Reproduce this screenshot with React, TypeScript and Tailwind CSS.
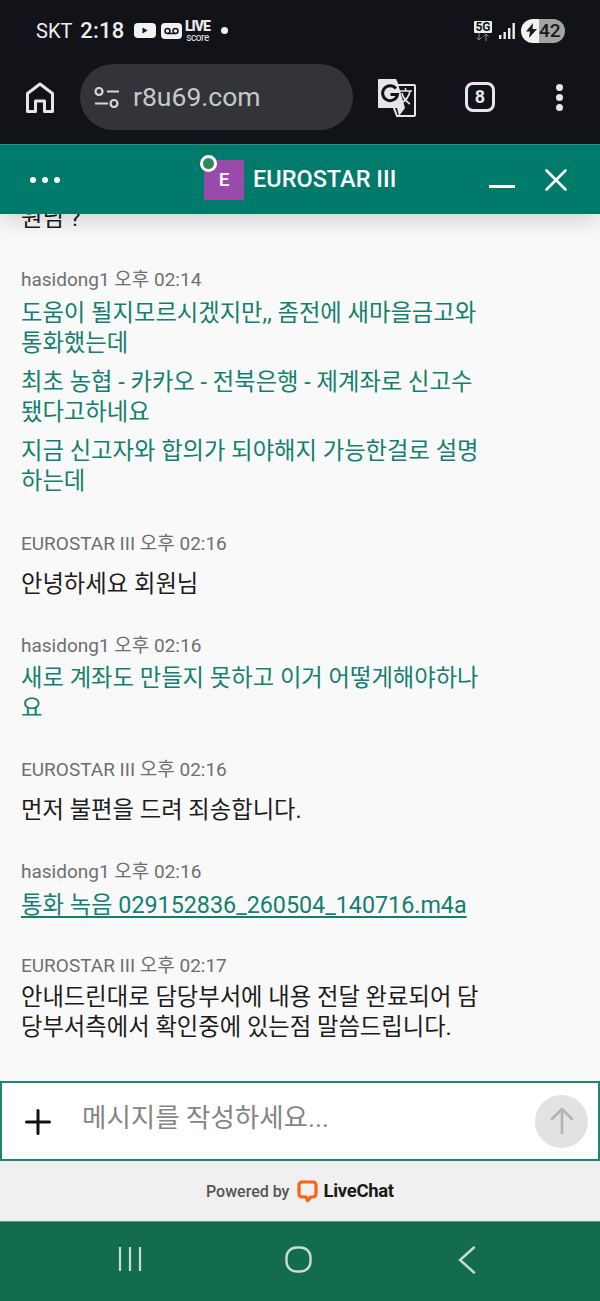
import React from "react";

const FONT = "font-['Roboto','Noto_Sans_CJK_KR',sans-serif]";

function Name({ children, cls }: { children: React.ReactNode; cls: string }) {
  return <div className={`text-[19px] leading-[24px] text-[#6f6f6f] ${cls}`}>{children}</div>;
}

function Line({ children, cls = "" }: { children: React.ReactNode; cls?: string }) {
  return <div className={`text-[23.3px] leading-[30px] whitespace-nowrap ${cls}`}>{children}</div>;
}

function StatusBar() {
  return (
    <div className="h-[60px] flex items-center pl-[36px] pr-[35px] pt-[1px] text-[#eeeeee]">
      <span className="text-[20px] leading-none">SKT</span>
      <span className="ml-[8px] text-[22px] leading-none font-medium tracking-[0.2px]">2:18</span>
      <svg width="22" height="15" viewBox="0 0 22 15" className="ml-[10px]">
        <rect width="22" height="15" rx="4" fill="#f2f2f2" />
        <path d="M8.500 4.500v6l5-3z" fill="#121318" />
      </svg>
      <svg width="21" height="16" viewBox="0 0 21 16" className="ml-[5px]">
        <rect width="21" height="16" rx="4" fill="#f2f2f2" />
        <circle cx="6.500" cy="8" r="2.500" fill="none" stroke="#121318" strokeWidth="1.500" />
        <circle cx="14.500" cy="8" r="2.500" fill="none" stroke="#121318" strokeWidth="1.500" />
        <path d="M6.500 10.500h8" stroke="#121318" strokeWidth="1.500" />
      </svg>
      <div className="ml-[4px] flex flex-col items-center w-[22px] text-[#e8e8e8]">
        <span className="text-[14px] leading-[13px] font-black tracking-[-1px]">LIVE</span>
        <span className="text-[10px] leading-[9px] tracking-[-0.4px]">score</span>
      </div>
      <span className="ml-[13px] w-[7px] h-[7px] rounded-full bg-[#f0f0f0]" />
      <div className="ml-auto flex items-center">
        <div className="flex flex-col items-center w-[18px] mr-[7px]">
          <span className="bg-[#eeeeee] text-[#121318] text-[12px] leading-[12px] font-bold px-[1px] rounded-[1px]">5G</span>
          <svg width="16" height="8" viewBox="0 0 16 8">
            <path d="M4 0v7M1.500 4.500 4 7l2.500-2.500M11 8V1M8.500 3.500 11 1l2.500 2.500" stroke="#8a8a8a" strokeWidth="1" fill="none" />
          </svg>
        </div>
        <svg width="16" height="16" viewBox="0 0 16 16" className="mr-[6px]">
          <rect x="0" y="12" width="2.400" height="4" fill="#eeeeee" />
          <rect x="4.500" y="9" width="2.400" height="7" fill="#eeeeee" />
          <rect x="9" y="5" width="2.400" height="11" fill="#eeeeee" />
          <rect x="13.500" y="0" width="2.400" height="16" fill="#eeeeee" />
        </svg>
        <div className="w-[44px] h-[24px] rounded-full bg-[linear-gradient(90deg,#f2f2f2_0,#f2f2f2_40%,#a3a3a3_40%,#a3a3a3_100%)] flex items-center text-[#1a1a1a]">
          <svg width="11" height="15" viewBox="0 0 11 15" className="ml-[5px]">
            <path d="M7 0 0 8.500h4L3 15l8-9H6.500z" fill="#1a1a1a" />
          </svg>
          <span className="ml-[2px] text-[19px] leading-none font-medium">42</span>
        </div>
      </div>
    </div>
  );
}

function Toolbar() {
  return (
    <div className="flex items-start h-[84px] pt-[4px]">
      <div className="w-[80px] h-[66px] flex items-center pl-[26px]">
        <svg width="28" height="31" viewBox="0 0 28 31" fill="none" stroke="#e6e6ea" strokeWidth="3">
          <path d="M1.500 29.500V11.500L14 2l12.500 9.500v18H18.500V19h-9v10.500z" strokeLinejoin="round" />
        </svg>
      </div>
      <div className="w-[273px] h-[66px] rounded-full bg-[#333438] flex items-center pl-[14px]">
        <svg width="26" height="21" viewBox="0 0 26 21" fill="none" stroke="#d8d8dc" strokeWidth="2.200">
          <circle cx="5" cy="4.500" r="3.500" />
          <path d="M13 4.500h12M1 16.500h13" />
          <circle cx="20" cy="16.500" r="3.500" />
        </svg>
        <span className="ml-[13px] text-[26.500px] leading-none text-[#c8c8cc]">r8u69.com</span>
      </div>
      <svg width="38" height="38" viewBox="0 0 38 38" className="ml-[25px] mt-[15px]">
        <path d="M17 6h19a1 1 0 0 1 1 1v29a1 1 0 0 1-1 1H19l-3-8z" fill="#121318" stroke="#e6e6ea" strokeWidth="2" />
        <path d="M1 0h17l1.500 3 7.500 26H1a1 1 0 0 1-1-1V1a1 1 0 0 1 1-1z" fill="#e6e6ea" />
        <path d="M19 29h8l-6 8z" fill="#e6e6ea" />
        <path d="M18 9.500a7.500 7.500 0 1 0 1.500 6h-7" fill="none" stroke="#121318" strokeWidth="3" />
        <path d="M21 12h13M27.500 9v3M32 12c-1 6-5 10-9 12M24 14c1 5 5 9 8 11" fill="none" stroke="#e6e6ea" strokeWidth="1.600" />
      </svg>
      <div className="ml-[49px] mt-[18px] w-[30px] h-[30px] rounded-[8px] border-[3px] border-[#e6e6ea] flex items-center justify-center">
        <span className="text-[18px] leading-none font-bold text-[#e6e6ea]">8</span>
      </div>
      <div className="ml-[61px] mt-[20px] flex flex-col gap-[3px]">
        <span className="w-[7px] h-[7px] rounded-full bg-[#e6e6ea]" />
        <span className="w-[7px] h-[7px] rounded-full bg-[#e6e6ea]" />
        <span className="w-[7px] h-[7px] rounded-full bg-[#e6e6ea]" />
      </div>
    </div>
  );
}

function ChatHeader() {
  return (
    <div className="relative z-10 h-[70px] shrink-0 bg-[#007a6b] flex items-center shadow-[0_6px_22px_rgba(0,0,0,0.16)] border-t border-[#2f8d80]">
      <div className="ml-[30px] flex gap-[6px] w-[174px]">
        <span className="w-[6px] h-[6px] rounded-full bg-white" />
        <span className="w-[6px] h-[6px] rounded-full bg-white" />
        <span className="w-[6px] h-[6px] rounded-full bg-white" />
      </div>
      <div className="relative w-[40px] h-[40px] bg-[#9a4aa8] flex items-center justify-center">
        <span className="text-[19px] font-medium text-white leading-none">E</span>
        <span className="absolute -left-[4px] -top-[5px] w-[17px] h-[17px] rounded-full bg-[#2e8b57] border-[3px] border-white" />
      </div>
      <span className="ml-[9px] text-[23.500px] leading-none font-medium text-white">EUROSTAR III</span>
      <span className="ml-[93px] mt-[14px] w-[26px] h-[3px] bg-white" />
      <svg width="22" height="22" viewBox="0 0 22 22" className="ml-[30px]" stroke="white" strokeWidth="2.600" strokeLinecap="round">
        <path d="M1.500 1.500l19 19M20.500 1.500l-19 19" />
      </svg>
    </div>
  );
}

function Messages() {
  const green = "text-[#12806f]";
  const black = "text-[#1c1c1c]";
  return (
    <div className="flex-1 min-h-0 overflow-hidden bg-[#f9f9f9] pl-[21px] -mt-[11px] pt-0">
      <Line cls={black}>원님 ?</Line>

      <Name cls="mt-[35px]">hasidong1 오후 02:14</Name>
      <Line cls={`${green} mt-[6px]`}>도움이 될지모르시겠지만,, 좀전에 새마을금고와</Line>
      <Line cls={green}>통화했는데</Line>
      <Line cls={`${green} mt-[9px]`}>최초 농협 - 카카오 - 전북은행 - 제계좌로 신고수</Line>
      <Line cls={green}>됐다고하네요</Line>
      <Line cls={`${green} mt-[9px]`}>지금 신고자와 합의가 되야해지 가능한걸로 설명</Line>
      <Line cls={green}>하는데</Line>

      <Name cls="mt-[36px]">EUROSTAR III 오후 02:16</Name>
      <Line cls={`${black} mt-[13px]`}>안녕하세요 회원님</Line>

      <Name cls="mt-[35px]">hasidong1 오후 02:16</Name>
      <Line cls={`${green} mt-[5px]`}>새로 계좌도 만들지 못하고 이거 어떻게해야하나</Line>
      <Line cls={green}>요</Line>

      <Name cls="mt-[35px]">EUROSTAR III 오후 02:16</Name>
      <Line cls={`${black} mt-[13px]`}>먼저 불편을 드려 죄송합니다.</Line>

      <Name cls="mt-[35px]">hasidong1 오후 02:16</Name>
      <Line cls={`${green} mt-[6px] underline underline-offset-[3px]`}>통화 녹음 029152836_260504_140716.m4a</Line>

      <Name cls="mt-[34px]">EUROSTAR III 오후 02:17</Name>
      <Line cls={`${black} mt-[4px]`}>안내드린대로 담당부서에 내용 전달 완료되어 담</Line>
      <Line cls={black}>당부서측에서 확인중에 있는점 말씀드립니다.</Line>
    </div>
  );
}

function InputBar() {
  return (
    <div className="h-[80px] shrink-0 bg-white border-2 border-[#1f8573] flex items-center">
      <svg width="26" height="26" viewBox="0 0 26 26" className="ml-[23px] mt-[2px]" stroke="#111111" strokeWidth="3" strokeLinecap="round">
        <path d="M13 1.500v23M1.500 13h23" />
      </svg>
      <span className="ml-[31px] -mt-[6px] text-[26.500px] leading-none text-[#858585]">메시지를 작성하세요...</span>
      <div className="ml-auto mr-[10px] w-[53px] h-[53px] rounded-full bg-[#e2e2e2] flex items-center justify-center">
        <svg width="24" height="28" viewBox="0 0 24 28" fill="none" stroke="#b4b4b4" strokeWidth="2.600" strokeLinecap="round" strokeLinejoin="round">
          <path d="M12 26V2M2 12 12 2l10 10" />
        </svg>
      </div>
    </div>
  );
}

function Footer() {
  return (
    <div className="h-[60px] shrink-0 bg-[#f0f0f0] flex items-center pl-[206px] pt-[1px]">
      <span className="text-[16px] leading-none font-medium text-[#555555]">Powered by</span>
      <svg width="21" height="23" viewBox="0 0 21 23" className="ml-[8px]">
        <path d="M5 2h11a3 3 0 0 1 3 3v9a3 3 0 0 1-3 3h-2l-3.500 3.500L9 17H5a3 3 0 0 1-3-3V5a3 3 0 0 1 3-3z" fill="none" stroke="#ff5f0f" strokeWidth="3.200" strokeLinejoin="round" />
      </svg>
      <span className="ml-[5px] text-[18.500px] leading-none font-bold text-[#1a1a1a] tracking-[-0.3px]">LiveChat</span>
    </div>
  );
}

function NavBar() {
  return (
    <div className="h-[80px] shrink-0 bg-[#146c50] border-t border-[#5d9a86] flex items-start pt-[25px]">
      <svg width="24" height="24" viewBox="0 0 24 24" className="ml-[118px]" stroke="#c6dcd4" strokeWidth="2.200">
        <path d="M2 0v24M12 0v24M22 0v24" />
      </svg>
      <svg width="27" height="27" viewBox="0 0 27 27" className="ml-[143px] -mt-[1px]" fill="none" stroke="#c6dcd4" strokeWidth="2.400">
        <rect x="1.500" y="1.500" width="24" height="24" rx="10" />
      </svg>
      <svg width="18" height="28" viewBox="0 0 18 28" className="ml-[146px] -mt-[1px]" fill="none" stroke="#c6dcd4" strokeWidth="2.400" strokeLinecap="round">
        <path d="M16 1.500 2 14l14 12.500" />
      </svg>
    </div>
  );
}

export default function App() {
  return (
    <div className={`w-[600px] h-[1301px] flex flex-col overflow-hidden ${FONT}`}>
      <div className="h-[144px] shrink-0 bg-[#121318] relative z-20">
        <StatusBar />
        <Toolbar />
      </div>
      <ChatHeader />
      <Messages />
      <InputBar />
      <Footer />
      <NavBar />
    </div>
  );
}
